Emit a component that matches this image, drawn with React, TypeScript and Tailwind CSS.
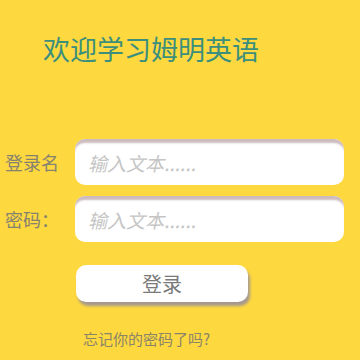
export default function App() {
  return (
    <div className="w-[360px] h-[360px] bg-[#fed83f] font-['Noto_Sans_CJK_SC','Noto_Sans',sans-serif] flex flex-col overflow-hidden">
      <h1 className="pl-[43px] pt-[35px] text-[27px] leading-[27px] text-[#3b8f7c] font-normal">欢迎学习姆明英语</h1>
      <div className="mt-[77px] flex items-center">
        <div className="w-[75px] pl-[5px] text-[18px] leading-[24px] text-[#858270]">登录名</div>
        <input
          className="w-[269px] h-[46px] rounded-[10px] bg-white pl-[13px] text-[19px] outline-none shadow-[inset_0_5px_2px_-1px_#cdbcbf] placeholder:italic placeholder:text-[#c5c5c5]"
          placeholder="输入文本......"
        />
      </div>
      <div className="mt-[11px] flex items-center">
        <div className="w-[75px] pl-[5px] text-[18px] leading-[24px] text-[#858270]">密码：</div>
        <input
          className="w-[269px] h-[46px] rounded-[10px] bg-white pl-[13px] text-[19px] outline-none shadow-[inset_0_5px_2px_-1px_#cdbcbf] placeholder:italic placeholder:text-[#c5c5c5]"
          placeholder="输入文本......"
        />
      </div>
      <div className="mt-[23px] pl-[76px]">
        <button className="w-[172px] h-[37px] rounded-[10px] bg-white text-[20px] leading-[37px] text-[#7a7a7a] shadow-[2px_4px_3px_#a59891]">登录</button>
      </div>
      <div className="mt-[27px] pl-[83px] text-[15px] leading-[20px] text-[#8a8468]">忘记你的密码了吗?</div>
    </div>
  );
}
